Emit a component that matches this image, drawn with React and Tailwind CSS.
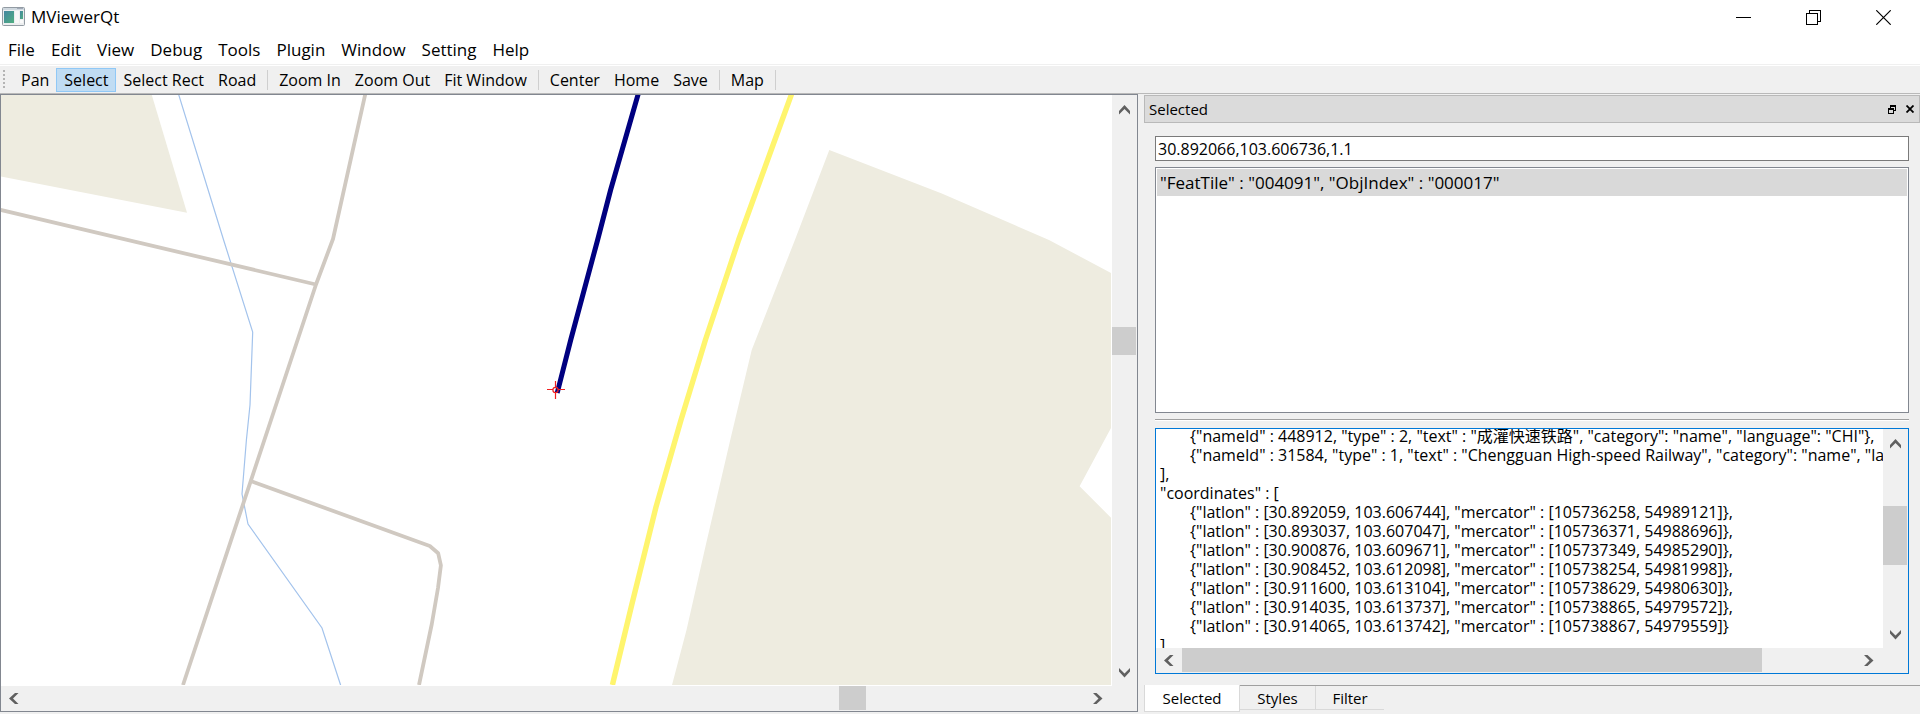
import { useLayoutEffect, useRef } from "react";

const MENUS = ["File", "Edit", "View", "Debug", "Tools", "Plugin", "Window", "Setting", "Help"];

const TOOL_GROUPS = [
  ["Pan", "Select", "Select Rect", "Road"],
  ["Zoom In", "Zoom Out", "Fit Window"],
  ["Center", "Home", "Save"],
  ["Map"],
];

const COORDINATES = [
  ["30.892059", "103.606744", "105736258", "54989121"],
  ["30.893037", "103.607047", "105736371", "54988696"],
  ["30.900876", "103.609671", "105737349", "54985290"],
  ["30.908452", "103.612098", "105738254", "54981998"],
  ["30.911600", "103.613104", "105738629", "54980630"],
  ["30.914035", "103.613737", "105738865", "54979572"],
  ["30.914065", "103.613742", "105738867", "54979559"],
];

const DETAILS = [
  '"names" : [',
  '\t{"nameId" : 448912, "type" : 2, "text" : "成灌快速铁路", "category": "name", "language": "CHI"},',
  '\t{"nameId" : 31584, "type" : 1, "text" : "Chengguan High-speed Railway", "category": "name", "language": "ENG"}',
  "],",
  '"coordinates" : [',
  ...COORDINATES.map(
    ([lat, lon, mx, my], i) =>
      `\t{"latlon" : [${lat}, ${lon}], "mercator" : [${mx}, ${my}]}${i < COORDINATES.length - 1 ? "," : ""}`
  ),
  "]",
  "}",
].join("\n");

function TitleBar() {
  const control = "flex h-full w-[70px] items-center justify-center";
  return (
    <header className="flex h-[34px] shrink-0 items-center px-[2px]">
      <svg className="h-5 w-6 shrink-0" viewBox="0 0 24 20" aria-hidden="true">
        <defs>
          <linearGradient id="pane" x1="0" y1="0" x2="1" y2="1">
            <stop offset="0" stopColor="#4486a0" />
            <stop offset="1" stopColor="#4fae80" />
          </linearGradient>
        </defs>
        <rect x="0.5" y="0.5" width="22" height="18" rx="1" fill="#eceeef" stroke="#929ba3" />
        <rect x="1" y="1" width="21" height="2" fill="#cfd8df" />
        <rect x="15" y="1" width="6" height="1" fill="#a2aab8" />
        <rect x="2" y="4" width="10" height="12" fill="url(#pane)" />
        <rect x="13" y="4" width="4" height="12" fill="#f7f7f7" />
        <rect x="18" y="4" width="3" height="8" fill="url(#pane)" />
        <rect x="18" y="13" width="3" height="3" fill="#fafafa" />
      </svg>
      <h1 className="ml-1 flex-1 pl-[1px] text-[17px] leading-6">MViewerQt</h1>
      <button type="button" aria-label="Minimize" className={control}>
        <svg width="15" height="15" viewBox="0 0 15 15" stroke="#000" shapeRendering="crispEdges">
          <path d="M0 7.5H15" />
        </svg>
      </button>
      <button type="button" aria-label="Restore" className={control}>
        <svg width="15" height="15" viewBox="0 0 15 15" fill="none" stroke="#000" shapeRendering="crispEdges">
          <path d="M0.5 3.5H11.5V14.5H0.5ZM3.5 3.5V0.5H14.5V11.5H11.5" />
        </svg>
      </button>
      <button type="button" aria-label="Close" className={control}>
        <svg width="15" height="15" viewBox="0 0 15 15" stroke="#000" strokeWidth="1.2">
          <path d="M0.3 0.3L14.7 14.7M14.7 0.3L0.3 14.7" />
        </svg>
      </button>
    </header>
  );
}

function Separator() {
  return <span className="mx-1 h-5 w-px bg-[#cfcfcf]" />;
}

function ToolBar() {
  return (
    <div className="flex h-7 shrink-0 items-center border-b border-[#b9b9b9] bg-[#f0f0f0] text-[16px] leading-5">
      <svg className="mr-2 ml-[3px] h-[22px] w-[3px]" viewBox="0 0 3 22" shapeRendering="crispEdges" aria-hidden="true">
        {[1, 5, 9, 13, 17].map((y) => (
          <rect key={y} x="0" y={y} width="2" height="2" fill="#b4b4b4" />
        ))}
      </svg>
      {TOOL_GROUPS.map((group, g) => (
        <div key={g} className="flex items-center">
          {group.map((name) =>
            name === "Select" ? (
              <button
                key={name}
                type="button"
                aria-pressed="true"
                className="h-6 border border-[#90c8f6] bg-[#c0dcf3] px-[7px] pt-px"
              >
                {name}
              </button>
            ) : (
              <button key={name} type="button" className="h-6 px-[7px]">
                {name}
              </button>
            )
          )}
          <Separator />
        </div>
      ))}
    </div>
  );
}

const CHEVRONS = {
  up: "M0 6L5.5 0L11 6V9.5L5.5 4L0 9.5Z",
  down: "M0 3.5L5.5 9.5L11 3.5V0L5.5 5.5L0 0Z",
  left: "M6 0L0 5.5L6 11H9.5L4 5.5L9.5 0Z",
  right: "M3.5 0L9.5 5.5L3.5 11H0L5.5 5.5L0 0Z",
};

function Chevron({ dir }) {
  const vertical = dir === "up" || dir === "down";
  const w = vertical ? 11 : 10;
  const h = vertical ? 10 : 11;
  return (
    <svg width={w} height={h} viewBox={`0 0 ${w} ${h}`} fill="#606060">
      <path d={CHEVRONS[dir]} />
    </svg>
  );
}

// before / thumb / after are proportions of the free track.
function ScrollBar({ vertical, before, thumb, after }) {
  const button = vertical
    ? "flex h-[26px] w-full shrink-0 items-center justify-center"
    : "flex h-full w-[26px] shrink-0 items-center justify-center";
  return (
    <div className={vertical ? "flex w-[25px] shrink-0 flex-col bg-[#f0f0f0] pt-[2px] pr-px" : "flex h-[25px] shrink-0 bg-[#f0f0f0] pr-px pb-px"}>
      <button type="button" aria-label={vertical ? "Scroll up" : "Scroll left"} className={button}>
        <Chevron dir={vertical ? "up" : "left"} />
      </button>
      <div style={{ flex: before }} />
      <div className="bg-[#cdcdcd]" style={{ flex: thumb }} />
      <div style={{ flex: after }} />
      <button type="button" aria-label={vertical ? "Scroll down" : "Scroll right"} className={button}>
        <Chevron dir={vertical ? "down" : "right"} />
      </button>
    </div>
  );
}

function MapCanvas() {
  return (
    <svg
      className="block h-full w-full"
      viewBox="1 95 1111 591"
      preserveAspectRatio="xMinYMin slice"
      fill="none"
      role="img"
      aria-label="Map"
    >
      <g fill="#eeece0">
        <path d="M1 95H151.8L187 212.7L1 176.5Z" />
        <path d="M829.3 150L941.8 193.5L1049 240L1111 273V428L1079.6 486.3L1111 517.7V685H672L686.5 630L705.4 546.7L730 441L751.7 350L794.9 240Z" />
      </g>
      <path d="M178.5 94L223.6 240L252.7 332L250 405L246.4 440L242 494L248 524L322 628L340.6 685" stroke="#a3c3ec" strokeWidth="1.2" />
      <g stroke="#d0c9c1" strokeWidth="3.8" strokeLinejoin="round">
        <path d="M365.3 94L333 239L316 284.5L183 685" />
        <path d="M0 209.8L316 284.5" />
        <path d="M251.5 481.3L429.8 546L438.2 553.3L440.9 565.3L438 588L431.8 624L419 685" />
      </g>
      <path d="M791.6 94L772.3 147L738.6 240L705.4 340L681 420L656 507L631.7 605L612.4 685" stroke="#fff56e" strokeWidth="5.4" strokeLinejoin="round" />
      <path d="M638.2 94L610.6 190L597.6 240L570.7 340L557.2 393" stroke="#000080" strokeWidth="5" strokeLinejoin="round" />
      <path d="M1 685.5H1112M1111.5 95V685" stroke="#fff" />
      <g stroke="#f02020" strokeWidth="1.2">
        <circle cx="555.5" cy="390" r="2.6" />
        <path d="M547 389.5H553M558 389.5H565M555.5 381V387.4M555.5 392.6V399" />
      </g>
    </svg>
  );
}

function DetailsBox() {
  const ref = useRef(null);
  useLayoutEffect(() => {
    ref.current.scrollTop = 21;
  }, []);
  return (
    <div className="flex min-h-0 flex-1 flex-col border border-[#0078d7] bg-[#f0f0f0]">
      <div className="flex min-h-0 flex-1">
        <textarea
          ref={ref}
          readOnly
          wrap="off"
          aria-label="Feature details"
          defaultValue={DETAILS}
          className="m-0 block min-w-0 flex-1 resize-none overflow-hidden border-0 bg-white pl-1 text-[16px] leading-[19px] whitespace-pre outline-none [tab-size:30px]"
        />
        <ScrollBar vertical before={49} thumb={60} after={57} />
      </div>
      <div className="flex">
        <div className="min-w-0 flex-1">
          <ScrollBar before={0} thumb={581} after={94} />
        </div>
        <div className="w-[25px]" />
      </div>
    </div>
  );
}

function Dock() {
  return (
    <aside className="flex min-h-0 min-w-0 flex-col pt-px">
      <div className="flex h-7 shrink-0 items-center border border-[#b9b9b9] bg-[#dbdbdb] pr-[5px] pl-1">
        <h2 className="flex-1 text-[15px] leading-5">Selected</h2>
        <button type="button" aria-label="Float" className="mr-[10px]">
          <svg width="8" height="9" viewBox="0 0 8 9" fill="#000" shapeRendering="crispEdges">
            <path fillRule="evenodd" d="M2 0H8V6H6V5H7V2H3V3H2ZM0 3H6V9H0ZM1 5H5V8H1Z" />
          </svg>
        </button>
        <button type="button" aria-label="Close panel">
          <svg width="8" height="8" viewBox="0 0 8 8" stroke="#000" strokeWidth="1.8">
            <path d="M0.5 0.5L7.5 7.5M7.5 0.5L0.5 7.5" />
          </svg>
        </button>
      </div>
      <div className="flex min-h-0 flex-1 flex-col px-[11px] pt-[13px] pb-[11px]">
        <input
          type="text"
          aria-label="Position"
          defaultValue="30.892066,103.606736,1.1"
          className="mb-[6px] h-[25px] shrink-0 border border-[#7a7a7a] bg-white px-[2px] text-[16px] leading-5 outline-none"
        />
        <ul className="min-h-0 flex-1 border border-[#828790] bg-white text-[17px] leading-[27px]">
          <li className="m-px bg-[#d9d9d9] px-[3px]">{'"FeatTile" : "004091", "ObjIndex" : "000017"'}</li>
        </ul>
        <div className="mt-[6px] mb-[7px] h-[2px] shrink-0 border-t border-[#a0a0a0] bg-white" />
        <DetailsBox />
      </div>
      <div role="tablist" className="flex h-[29px] shrink-0 items-start text-[15px] leading-5">
        <button type="button" role="tab" aria-selected="true" className="h-[27px] w-24 border-x border-b border-[#d9d9d9] bg-white">
          Selected
        </button>
        <div className="flex flex-1 border-t border-[#a0a0a0]">
          <button type="button" role="tab" aria-selected="false" className="h-6 w-[76px] border-r border-b border-[#d9d9d9]">
            Styles
          </button>
          <button type="button" role="tab" aria-selected="false" className="h-6 w-[68px] border-b border-[#d9d9d9]">
            Filter
          </button>
        </div>
      </div>
    </aside>
  );
}

export default function App() {
  return (
    <div className="flex h-screen min-h-[500px] flex-col overflow-hidden bg-white font-['Open_Sans','Noto_Sans_CJK_SC',sans-serif] text-black">
      <TitleBar />
      <nav className="mb-px flex h-[31px] shrink-0 items-center border-b border-[#f0f0f0] text-[17px] leading-6">
        {MENUS.map((name) => (
          <button key={name} type="button" className="h-full px-2 pt-[2px]">
            {name}
          </button>
        ))}
      </nav>
      <ToolBar />
      <main className="grid min-h-0 flex-1 grid-cols-[1138fr_776fr] grid-rows-[minmax(0,1fr)] gap-x-[6px] bg-[#f0f0f0]">
        <section className="mb-[2px] flex min-h-0 min-w-0 flex-col border border-[#828790]">
          <div className="flex min-h-0 flex-1">
            <div className="min-w-0 flex-1 overflow-hidden bg-white">
              <MapCanvas />
            </div>
            <ScrollBar vertical before={205} thumb={28} after={306} />
          </div>
          <div className="flex">
            <div className="min-w-0 flex-1">
              <ScrollBar before={812} thumb={27} after={219} />
            </div>
            <div className="w-[25px]" />
          </div>
        </section>
        <Dock />
      </main>
    </div>
  );
}
